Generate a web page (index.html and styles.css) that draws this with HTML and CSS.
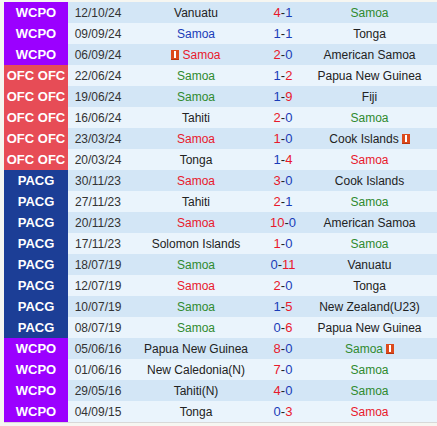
FILE: index.html
```html
<!DOCTYPE html>
<html>
<head>
<meta charset="utf-8">
<link rel="stylesheet" href="styles.css">
</head>
<body>
<div class="wrap">
<table class="matches">
<colgroup><col class="c-comp"><col class="c-date"><col class="c-home"><col class="c-score"><col class="c-away"></colgroup>
<tbody>
<tr><td class="comp wcpo">WCPO</td><td class="date">12/10/24</td><td>Vanuatu</td><td class="score"><span class="r">4</span>-<span class="b">1</span></td><td><span class="lose">Samoa</span></td></tr>
<tr><td class="comp wcpo">WCPO</td><td class="date">09/09/24</td><td><span class="draw">Samoa</span></td><td class="score"><span class="b">1</span>-<span class="b">1</span></td><td>Tonga</td></tr>
<tr><td class="comp wcpo">WCPO</td><td class="date">06/09/24</td><td><span class="card"></span><span class="win">Samoa</span></td><td class="score"><span class="r">2</span>-<span class="b">0</span></td><td>American Samoa</td></tr>
<tr><td class="comp ofc">OFC OFC</td><td class="date">22/06/24</td><td><span class="lose">Samoa</span></td><td class="score"><span class="b">1</span>-<span class="r">2</span></td><td>Papua New Guinea</td></tr>
<tr><td class="comp ofc">OFC OFC</td><td class="date">19/06/24</td><td><span class="lose">Samoa</span></td><td class="score"><span class="b">1</span>-<span class="r">9</span></td><td>Fiji</td></tr>
<tr><td class="comp ofc">OFC OFC</td><td class="date">16/06/24</td><td>Tahiti</td><td class="score"><span class="r">2</span>-<span class="b">0</span></td><td><span class="lose">Samoa</span></td></tr>
<tr><td class="comp ofc">OFC OFC</td><td class="date">23/03/24</td><td><span class="win">Samoa</span></td><td class="score"><span class="r">1</span>-<span class="b">0</span></td><td>Cook Islands<span class="card after"></span></td></tr>
<tr><td class="comp ofc">OFC OFC</td><td class="date">20/03/24</td><td>Tonga</td><td class="score"><span class="b">1</span>-<span class="r">4</span></td><td><span class="win">Samoa</span></td></tr>
<tr><td class="comp pacg">PACG</td><td class="date">30/11/23</td><td><span class="win">Samoa</span></td><td class="score"><span class="r">3</span>-<span class="b">0</span></td><td>Cook Islands</td></tr>
<tr><td class="comp pacg">PACG</td><td class="date">27/11/23</td><td>Tahiti</td><td class="score"><span class="r">2</span>-<span class="b">1</span></td><td><span class="lose">Samoa</span></td></tr>
<tr><td class="comp pacg">PACG</td><td class="date">20/11/23</td><td><span class="win">Samoa</span></td><td class="score"><span class="r">10</span>-<span class="b">0</span></td><td>American Samoa</td></tr>
<tr><td class="comp pacg">PACG</td><td class="date">17/11/23</td><td>Solomon Islands</td><td class="score"><span class="r">1</span>-<span class="b">0</span></td><td><span class="lose">Samoa</span></td></tr>
<tr><td class="comp pacg">PACG</td><td class="date">18/07/19</td><td><span class="lose">Samoa</span></td><td class="score"><span class="b">0</span>-<span class="r">11</span></td><td>Vanuatu</td></tr>
<tr><td class="comp pacg">PACG</td><td class="date">12/07/19</td><td><span class="win">Samoa</span></td><td class="score"><span class="r">2</span>-<span class="b">0</span></td><td>Tonga</td></tr>
<tr><td class="comp pacg">PACG</td><td class="date">10/07/19</td><td><span class="lose">Samoa</span></td><td class="score"><span class="b">1</span>-<span class="r">5</span></td><td>New Zealand(U23)</td></tr>
<tr><td class="comp pacg">PACG</td><td class="date">08/07/19</td><td><span class="lose">Samoa</span></td><td class="score"><span class="b">0</span>-<span class="r">6</span></td><td>Papua New Guinea</td></tr>
<tr><td class="comp wcpo">WCPO</td><td class="date">05/06/16</td><td>Papua New Guinea</td><td class="score"><span class="r">8</span>-<span class="b">0</span></td><td><span class="lose">Samoa</span><span class="card after"></span></td></tr>
<tr><td class="comp wcpo">WCPO</td><td class="date">01/06/16</td><td>New Caledonia(N)</td><td class="score"><span class="r">7</span>-<span class="b">0</span></td><td><span class="lose">Samoa</span></td></tr>
<tr><td class="comp wcpo">WCPO</td><td class="date">29/05/16</td><td>Tahiti(N)</td><td class="score"><span class="r">4</span>-<span class="b">0</span></td><td><span class="lose">Samoa</span></td></tr>
<tr><td class="comp wcpo">WCPO</td><td class="date">04/09/15</td><td>Tonga</td><td class="score"><span class="b">0</span>-<span class="r">3</span></td><td><span class="win">Samoa</span></td></tr>
</tbody>
</table>
</div>
</body>
</html>
```
FILE: styles.css
```css
html, body {
  margin: 0;
  padding: 0;
  background: #f6f6f1;
}
.wrap {
  padding: 2px 0 0 4px;
}
.matches {
  width: 433px;
  border-collapse: collapse;
  table-layout: fixed;
  font-family: "Liberation Sans", Arial, sans-serif;
  font-size: 12px;
  color: #222;
  border-bottom: 1px solid #d8d8d8;
}
.c-comp { width: 64px; }
.c-date { width: 60px; }
.c-home { width: 136px; }
.c-score { width: 38px; }
.c-away { width: 135px; }
.matches td {
  height: 21px;
  padding: 0;
  text-align: center;
  white-space: nowrap;
  overflow: hidden;
  vertical-align: middle;
}
.matches tr:nth-child(odd) { background: #d3e6f6; }
.matches tr:nth-child(even) { background: #eaf4fc; }
.comp {
  color: #fff;
  font-weight: bold;
  font-size: 13px;
}
.wcpo { background: #9b00ff; }
.ofc { background: #e74c56; }
.pacg { background: #1c3e96; }
.date { color: #333; }
.score { font-size: 13px; }
.r { color: #e8192c; }
.b { color: #1a3cb8; }
.win { color: #e8192c; }
.lose { color: #2f8a2f; }
.draw { color: #1a3cb8; }
.card {
  display: inline-block;
  position: relative;
  width: 8px;
  height: 10px;
  margin-right: 3px;
  vertical-align: -1px;
  background: #dc4a1c;
  border-bottom: 1px solid #b8350f;
  box-sizing: border-box;
}
.card::after {
  content: "";
  position: absolute;
  left: 3px;
  top: 1px;
  width: 2px;
  height: 7px;
  background: #fff;
}
.card.after {
  margin-right: 0;
  margin-left: 3px;
}
```
